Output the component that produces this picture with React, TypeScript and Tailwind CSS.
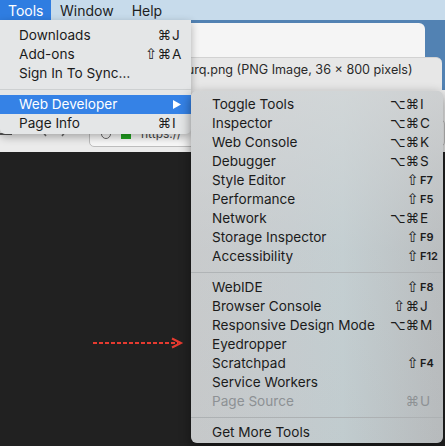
import React from "react";

const FONT = { fontFamily: "Inter, 'Liberation Sans', 'DejaVu Sans', sans-serif" };
const GLYPH = "font-['DejaVu_Sans',sans-serif]";

type Item = { label: string; mods?: string; key?: string; fkey?: boolean; disabled?: boolean };

const group1: Item[] = [
  { label: "Toggle Tools", mods: "⌥⌘", key: "I" },
  { label: "Inspector", mods: "⌥⌘", key: "C" },
  { label: "Web Console", mods: "⌥⌘", key: "K" },
  { label: "Debugger", mods: "⌥⌘", key: "S" },
  { label: "Style Editor", mods: "⇧", key: "F7", fkey: true },
  { label: "Performance", mods: "⇧", key: "F5", fkey: true },
  { label: "Network", mods: "⌥⌘", key: "E" },
  { label: "Storage Inspector", mods: "⇧", key: "F9", fkey: true },
  { label: "Accessibility", mods: "⇧", key: "F12", fkey: true },
];

const group2: Item[] = [
  { label: "WebIDE", mods: "⇧", key: "F8", fkey: true },
  { label: "Browser Console", mods: "⇧⌘", key: "J" },
  { label: "Responsive Design Mode", mods: "⌥⌘", key: "M" },
  { label: "Eyedropper" },
  { label: "Scratchpad", mods: "⇧", key: "F4", fkey: true },
  { label: "Service Workers" },
  { label: "Page Source", mods: "⌘", key: "U", disabled: true },
];

function Mods({ s }: { s?: string }) {
  if (!s) return null;
  return (
    <div className={`${GLYPH} flex items-center justify-end leading-[19px]`}>
      {s.split("").map((c, i) => (
        <span key={i} className={c === "⇧" ? "text-[15px]" : "text-[13.5px]"}>
          {c}
        </span>
      ))}
    </div>
  );
}

function SubRow({ item }: { item: Item }) {
  const color = item.disabled ? "text-[#8d9194]" : "text-[#1b1b1b]";
  return (
    <div className={`flex h-[19px] items-center ${color}`}>
      <div className="flex-1 pl-[21px] text-[13.6px] leading-[19px]">{item.label}</div>
      <Mods s={item.mods} />
      <div
        className={`w-[24px] pl-[1px] leading-[19px] ${
          item.fkey ? "text-[11px] font-semibold" : "text-[13.6px]"
        }`}
      >
        {item.key}
      </div>
    </div>
  );
}

function ToolsRow({
  label,
  mods,
  k,
  active,
  arrow,
}: {
  label: string;
  mods?: string;
  k?: string;
  active?: boolean;
  arrow?: boolean;
}) {
  return (
    <div
      className={`flex h-[19px] items-center ${
        active ? "bg-[#3582e6] text-white" : "text-[#1b1b1b]"
      }`}
    >
      <div className="flex-1 pl-[19px] text-[13.6px] leading-[19px]">{label}</div>
      <Mods s={mods} />
      <div className="flex w-[20px] items-center pl-[1px] text-[13.6px] leading-[19px]">
        {arrow ? (
          <svg width="8" height="9" viewBox="0 0 8 9" className="ml-[1px]">
            <path d="M0 0 L8 4.5 L0 9 Z" fill="white" />
          </svg>
        ) : (
          k
        )}
      </div>
    </div>
  );
}

export default function App() {
  return (
    <div
      className="relative flex h-[446px] w-[445px] flex-col overflow-hidden bg-[#5282b3]"
      style={FONT}
    >
      {/* menu bar */}
      <div className="flex h-[20px] items-center bg-[#c7dbeb] text-[14px] text-[#1e1e1e]">
        <div className="flex h-full w-[51px] items-center bg-[#2f7de1] pl-[8px] text-white">
          Tools
        </div>
        <div className="pl-[9px]">Window</div>
        <div className="pl-[18px]">Help</div>
      </div>

      {/* back window */}
      <div className="flex h-[37px]">
        <div className="mt-[3px] flex-1 rounded-tr-[6px] bg-[#f5f5f5]" />
        <div className="w-[20px]" />
      </div>

      {/* front window title band */}
      <div className="mr-[3px] h-[33px] rounded-tr-[6px] border-t border-[#d2d2d2] bg-[#e7e7e7]">
        <div className="whitespace-nowrap pl-[150px] pt-[3px] text-[12.6px] leading-[18px] text-[#2a2a2a]">
          hpeYxurq.png (PNG Image, 36 × 800 pixels)
        </div>
      </div>

      {/* toolbar */}
      <div className="flex h-[62px] items-end bg-[#ebebeb] pb-[5px]">
        <div className="mb-[12px] h-[8px] w-[12px] border-b-2 border-[#555]" />
        <svg width="8" height="12" viewBox="0 0 8 12" className="mb-[10px] ml-[28px]">
          <path d="M6 1 L2 6 L6 11" fill="none" stroke="#666" strokeWidth="1.5" />
        </svg>
        <svg width="8" height="12" viewBox="0 0 8 12" className="mb-[10px] ml-[12px]">
          <path d="M2 1 L6 6 L2 11" fill="none" stroke="#666" strokeWidth="1.5" />
        </svg>
        <div className="ml-[21px] flex h-[28px] flex-1 items-center gap-[10px] rounded-[5px] border border-[#bdbdbd] bg-[#f7f7f7] pl-[11px] pt-[2px]">
          <div className="h-[10px] w-[10px] rounded-full border border-[#666]" />
          <div className="h-[9px] w-[10px] bg-[#21a321]" />
          <div className="text-[12px] leading-[14px] text-[#444]">https://</div>
        </div>
      </div>

      {/* page content */}
      <div className="flex-1 bg-[#212121]" />

      {/* annotation arrow */}
      <svg
        className="absolute left-[90px] top-[335px]"
        width="96"
        height="16"
        viewBox="0 0 96 16"
      >
        <line
          x1="3"
          y1="8"
          x2="88"
          y2="8"
          stroke="#e63b30"
          strokeWidth="2"
          strokeDasharray="4 2"
        />
        <path d="M82 3.5 L91 8 L82 12.5" fill="none" stroke="#e63b30" strokeWidth="2" />
      </svg>

      {/* Tools menu */}
      <div className="absolute left-0 top-[20px] h-[114px] w-[191px] rounded-b-[5px] bg-[#e4e6e7] pt-[6px] shadow-[0_3px_8px_rgba(0,0,0,0.3)]">
        <ToolsRow label="Downloads" mods="⌘" k="J" />
        <ToolsRow label="Add-ons" mods="⇧⌘" k="A" />
        <ToolsRow label="Sign In To Sync…" />
        <div className="flex h-[12px] items-center">
          <div className="h-[1px] w-full bg-[#cdd0d1]" />
        </div>
        <ToolsRow label="Web Developer" active arrow />
        <ToolsRow label="Page Info" mods="⌘" k="I" />
      </div>

      {/* Web Developer submenu */}
      <div className="absolute left-[191px] top-[91px] h-[352px] w-[252px] overflow-hidden rounded-[6px] bg-[linear-gradient(90deg,#c9cbcc_0%,#c6cdd0_40%,#c3cfd2_60%,#b7babc_100%)] pt-[4px] shadow-[0_4px_12px_rgba(0,0,0,0.45)]">
        <div className="pointer-events-none absolute inset-0 bg-[linear-gradient(180deg,rgba(215,217,218,0.7)_0%,rgba(200,204,206,0.2)_45%,rgba(180,184,186,0.15)_100%)]" />
        <div className="relative">
          {group1.map((it) => (
            <SubRow key={it.label} item={it} />
          ))}
          <div className="flex h-[12px] items-center">
            <div className="h-[1px] w-full bg-[#b0b4b6]" />
          </div>
          {group2.map((it) => (
            <SubRow key={it.label} item={it} />
          ))}
          <div className="flex h-[12px] items-center">
            <div className="h-[1px] w-full bg-[#adb1b3]" />
          </div>
          <SubRow item={{ label: "Get More Tools" }} />
        </div>
      </div>
    </div>
  );
}
